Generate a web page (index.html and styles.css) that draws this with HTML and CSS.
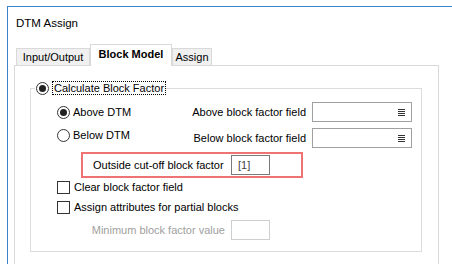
FILE: index.html
```html
<!DOCTYPE html>
<html lang="en">
<head>
  <meta charset="UTF-8" />
  <title>DTM Assign</title>
  <link rel="stylesheet" href="styles.css">
</head>
<body>

  <div class="window">
    <div class="title">DTM Assign</div>

    <div class="tabs-wrap">
      <div class="tabs">
        <div class="tab tab-io">Input/Output</div>
        <div class="tab tab-active">Block Model</div>
        <div class="tab tab-assign">Assign</div>
      </div>

      <div class="panel">
        <fieldset class="group">
          <legend class="group-legend">
            <span class="radio checked"></span>
            <span class="focus-label">Calculate Block Factor</span>
          </legend>

          <div class="group-body">
            <div class="opt-row">
              <div class="radio-label">
                <span class="radio checked"></span>
                <span>Above DTM</span>
              </div>
              <div class="field-label">Above block factor field</div>
              <div class="field-input">
                <svg width="7" height="7" viewBox="0 0 7 7"><path d="M0 0.5h7M0 2.5h7M0 4.5h7M0 6.5h7" stroke="#333" stroke-width="1"/></svg>
              </div>
            </div>

            <div class="opt-row row-gap">
              <div class="radio-label lift">
                <span class="radio"></span>
                <span>Below DTM</span>
              </div>
              <div class="field-label">Below block factor field</div>
              <div class="field-input">
                <svg width="7" height="7" viewBox="0 0 7 7"><path d="M0 0.5h7M0 2.5h7M0 4.5h7M0 6.5h7" stroke="#333" stroke-width="1"/></svg>
              </div>
            </div>

            <div class="cutoff-box">
              <div class="cutoff-label">Outside cut-off block factor</div>
              <div class="small-input">[1]</div>
            </div>

            <div class="check-row">
              <span class="checkbox"></span>
              <span>Clear block factor field</span>
            </div>

            <div class="check-row check-gap">
              <span class="checkbox"></span>
              <span>Assign attributes for partial blocks</span>
            </div>

            <div class="min-row">
              <div class="min-label">Minimum block factor value</div>
              <div class="small-input disabled"></div>
            </div>
          </div>
        </fieldset>
      </div>
    </div>
  </div>

</body>
</html>
```

FILE: styles.css
```css
body {
  font-family: "Liberation Sans", Arial, sans-serif;
  font-size: 11px;
  margin: 0;
  background: #fff;
  color: #000;
  overflow: hidden;
}

.window {
  margin: 6px 0 0 7px;
  height: 260px;
  border-top: 1px solid #3b84cc;
  border-left: 1px solid #3b84cc;
  overflow: hidden;
}

.title {
  box-sizing: border-box;
  height: 37px;
  padding: 9px 8px 0;
  font-size: 11.5px;
  line-height: 14px;
}

.tabs-wrap {
  margin-left: 6px;
  width: 425px;
}

.tabs {
  display: flex;
  align-items: flex-end;
  height: 21px;
  padding-left: 2px;
}

.tab {
  box-sizing: border-box;
  height: 17px;
  line-height: 16px;
  text-align: center;
  background: #f0f0f0;
  border: 1px solid #d9d9d9;
  border-bottom: none;
}

.tab-io {
  width: 74px;
}

.tab-active {
  position: relative;
  z-index: 1;
  width: 82px;
  height: 22px;
  margin-bottom: -1px;
  line-height: 19px;
  background: #fff;
  font-weight: bold;
}

.tab-assign {
  width: 40px;
}

.panel {
  box-sizing: border-box;
  height: 210px;
  padding: 15px 16px 0 15px;
  border: 1px solid #d9d9d9;
}

.group {
  margin: 0;
  min-width: 0;
  padding: 7px 9px 11px 4px;
  border: 1px solid #dcdcdc;
}

.group-legend {
  display: flex;
  align-items: center;
  height: 14px;
  padding: 0 0 0 1px;
}

.focus-label {
  margin-left: 3px;
  padding: 0 1px;
  line-height: 12px;
  border: 1px dotted #000;
}

.group-body {
  padding-left: 22px;
}

.radio {
  box-sizing: border-box;
  display: inline-flex;
  align-items: center;
  justify-content: center;
  width: 13px;
  height: 13px;
  border: 1px solid #333;
  border-radius: 50%;
  background: #fff;
  flex: none;
}

.radio.checked::after {
  content: "";
  width: 7px;
  height: 7px;
  border-radius: 50%;
  background: #222;
}

.checkbox {
  box-sizing: border-box;
  width: 13px;
  height: 13px;
  border: 1px solid #333;
  background: #fff;
  flex: none;
}

.opt-row {
  display: flex;
  align-items: center;
  height: 20px;
}

.row-gap {
  margin-top: 6px;
}

.radio-label {
  flex: 1;
  display: flex;
  align-items: center;
  gap: 3px;
}

.lift {
  margin-bottom: 6px;
}

.field-label {
  text-align: right;
}

.field-input {
  box-sizing: border-box;
  display: flex;
  align-items: center;
  justify-content: flex-end;
  width: 100px;
  height: 20px;
  margin-left: 6px;
  padding-right: 6px;
  border: 1px solid #a0a0a0;
  background: #fff;
}

.cutoff-box {
  box-sizing: border-box;
  display: flex;
  align-items: center;
  width: 222px;
  height: 26px;
  margin: 4px 0 0 24px;
  padding-left: 10px;
  border: 2px solid #f07373;
}

.cutoff-label {
  width: 138px;
}

.small-input {
  box-sizing: border-box;
  width: 39px;
  height: 20px;
  padding-left: 6px;
  line-height: 18px;
  border: 1px solid #7a7a7a;
  color: #444;
}

.small-input.disabled {
  border-color: #cfcfcf;
}

.check-row {
  display: flex;
  align-items: center;
  gap: 4px;
  height: 14px;
  margin-top: 2px;
}

.check-row.check-gap {
  margin-top: 6px;
}

.min-row {
  display: flex;
  align-items: center;
  height: 20px;
  margin-top: 6px;
}

.min-label {
  width: 168px;
  margin-right: 6px;
  text-align: right;
  color: #a0a0a0;
}
```
